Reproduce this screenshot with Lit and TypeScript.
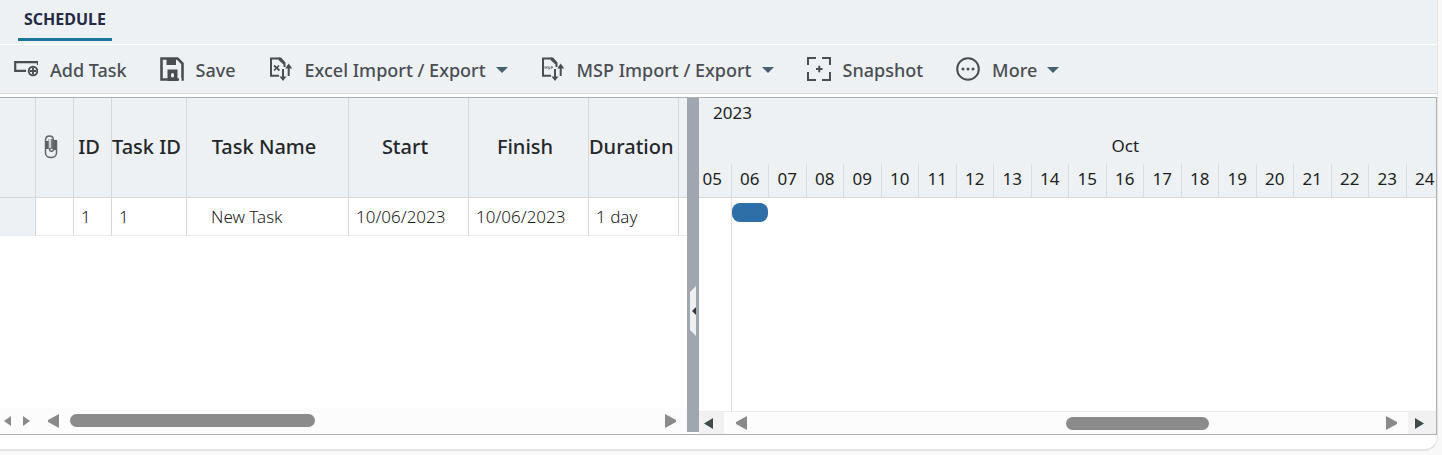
import { LitElement, html, css, svg } from "lit";
import { customElement, state } from "lit/decorators.js";

const transfer = svg`
  <path d="M10 18.700H2V1.500h8.500" fill="none" stroke="currentColor" stroke-width="2"/>
  <path d="M9.500 .5h2.500L16.500 5.500V10h-2V7.500L9.500 3z" fill="currentColor"/>
  <path d="M14 12v9M19.700 8v11" stroke="currentColor" stroke-width="2" fill="none"/>
  <path d="M10.500 19.500h7L14 24zM16.200 11.500h7L19.700 6.500z" fill="currentColor"/>`;

const icons: Record<string, unknown> = {
  add: svg`<path d="M24 8V5.200H1.200V13.800H12" fill="none" stroke="currentColor" stroke-width="2.200"/><circle cx="19" cy="14" r="4.300" fill="none" stroke="currentColor" stroke-width="1.900"/><path d="M16 14h6M19 11v6" stroke="currentColor" stroke-width="1.900"/>`,
  save: svg`
    <path d="M1.500 1.500H17.500L22.500 6.500V22.500H1.500z" fill="none" stroke="currentColor" stroke-width="2.600"/>
    <path d="M6.500 1h9.500v7H6.500zM7.500 12.500h10V24h-10z" fill="currentColor"/>
    <path d="M19 20.800h2.500V24H19z" fill="#edf1f4"/>
    <rect x="11" y="16" width="3" height="4.500" rx="1.500" fill="#edf1f4"/>`,
  excel: svg`${transfer}<path d="M5 8.500l5.500 5M10 8.500l-5 5" stroke="currentColor" stroke-width="1.700"/>`,
  msp: svg`${transfer}<path d="M4 12V9.500l1 1.500 1-1.500V12M8.500 9.700H7.300v1h1.200V12H7.100M10 12.200V9.700h1.600v1.200H10" fill="none" stroke="currentColor" stroke-width=".6"/>`,
  snapshot: svg`<path d="M1 8V1h8M15 1h8v7M23 15v8h-8M9 23H1v-8" fill="none" stroke="currentColor" stroke-width="2"/><path d="M9 12h6.500M12.250 8.750v6.500" stroke="currentColor" stroke-width="2"/>`,
  more: svg`<circle cx="12" cy="12" r="10.800" fill="none" stroke="currentColor" stroke-width="2"/><circle cx="7" cy="12" r="1.500" fill="currentColor"/><circle cx="12" cy="12" r="1.500" fill="currentColor"/><circle cx="17" cy="12" r="1.500" fill="currentColor"/>`,
};

const commands = [
  { icon: "add", label: "Add Task", menu: false },
  { icon: "save", label: "Save", menu: false },
  { icon: "excel", label: "Excel Import / Export", menu: true },
  { icon: "msp", label: "MSP Import / Export", menu: true },
  { icon: "snapshot", label: "Snapshot", menu: false },
  { icon: "more", label: "More", menu: true },
];

const days = Array.from({ length: 20 }, (_, i) => String(i + 5).padStart(2, "0"));

@customElement("schedule-toolbar")
export class ScheduleToolbar extends LitElement {
  static styles = css`
    :host {
      display: flex;
      align-items: center;
      gap: 33px;
      height: 48px;
      padding: 0 14px;
      background: #edf1f4;
      border-bottom: 1px solid #d5dade;
    }
    .command {
      display: flex;
      align-items: center;
      gap: 12px;
      padding: 0;
      border: 0;
      background: none;
      color: #4a4e53;
      font: 500 18px/24px "Noto Sans", "Open Sans", sans-serif;
      white-space: nowrap;
      cursor: pointer;
    }
    .label {
      padding-top: 2px;
    }
    .icon {
      width: 24px;
      height: 24px;
      flex: none;
    }
    .caret {
      width: 12px;
      height: 6px;
      margin: 2px 0 0 -2px;
      fill: #47606d;
    }
  `;
  render() {
    return commands.map(
      (c) => html`<button class="command" type="button">
        <svg class="icon" viewBox="0 0 24 24" aria-hidden="true">${icons[c.icon]}</svg>
        <span class="label">${c.label}</span>
        ${c.menu
          ? html`<svg class="caret" viewBox="0 0 12 6" aria-hidden="true"><path d="M0 0h12L6 6z" /></svg>`
          : ""}
      </button>`
    );
  }
}

@customElement("task-grid")
export class TaskGrid extends LitElement {
  static styles = css`
    :host {
      display: flex;
      flex-direction: column;
      flex: none;
      width: 687px;
      overflow: hidden;
      font-family: "Noto Sans", "Open Sans", sans-serif;
      background: #fff;
    }
    .grid {
      width: 100%;
      table-layout: fixed;
      border-collapse: separate;
      border-spacing: 0;
    }
    .c-row { width: 36px; }
    .c-small { width: 38px; }
    .c-task { width: 75px; }
    .c-name { width: 162px; }
    .c-date { width: 120px; }
    .c-dur { width: 90px; }
    .head,
    .cell {
      box-sizing: border-box;
      text-align: left;
      white-space: nowrap;
      border-right: 1px solid #d6d9dc;
      border-bottom: 1px solid #d6d9dc;
    }
    .head {
      height: 100px;
      padding: 0 7px 2px 0;
      background: #edf1f4;
      color: #24272a;
      font-size: 20px;
      font-weight: 500;
      text-align: center;
    }
    .cell {
      height: 38px;
      padding: 0 0 0 7px;
      color: #1c1c1c;
      font-size: 17px;
      font-weight: 300;
      line-height: 24px;
      border-bottom-color: #ececec;
    }
    .cell.rowhead { background: #edf1f4; }
    .cell.name { padding-left: 24px; }
    .head:last-child,
    .cell:last-child { border-right: 0; }
    .clip {
      display: block;
      width: 14px;
      height: 26px;
      margin-left: 8px;
    }
    .scroll {
      display: flex;
      align-items: center;
      height: 25px;
      margin-top: auto;
      padding-bottom: 1px;
      background: #fcfcfc;
    }
    .arrow {
      display: flex;
      align-items: center;
      justify-content: center;
      flex: none;
      padding: 0;
      border: 0;
      background: none;
      fill: #8a8a8a;
    }
    .small { width: 19px; height: 25px; }
    .small:first-child { width: 15px; }
    .small:nth-child(2) { width: 23px; }
    .big { width: 30px; height: 25px; }
    .track { flex: 1; margin: 0 1px 0 2px; }
    .gap { width: 2px; }
    .thumb {
      width: 42%;
      height: 13px;
      border-radius: 7px;
      background: #8b8b8b;
    }
  `;
  render() {
    return html`
      <table class="grid">
        <colgroup>
          <col class="c-row" /><col class="c-small" /><col class="c-small" /><col class="c-task" />
          <col class="c-name" /><col class="c-date" /><col class="c-date" /><col class="c-dur" /><col />
        </colgroup>
        <thead>
          <tr>
            <th class="head"></th>
            <th class="head" aria-label="Attachments">
              <svg class="clip" viewBox="0 0 14 26">
                <path d="M4.500 5h5v10h-5z" fill="#767a7f" />
                <path d="M2 7h2.500v8H2zM9.500 6H13v10H9.500z" fill="#5a5e64" />
                <path d="M1.500 17V6.500C1.500 .5 9.500 .5 9.500 6.500V15c0 3-4 3-4 0V8M12.500 6.500V19c0 6-11 6-11 0v-3" fill="none" stroke="#62666b" stroke-width="1.500" />
                <path d="M6 5v9" stroke="#edf1f4" stroke-width="1.500" />
              </svg>
            </th>
            <th class="head">ID</th>
            <th class="head">Task ID</th>
            <th class="head">Task Name</th>
            <th class="head">Start</th>
            <th class="head">Finish</th>
            <th class="head">Duration</th>
            <th class="head"></th>
          </tr>
        </thead>
        <tbody>
          <tr>
            <th class="cell rowhead"></th>
            <td class="cell"></td>
            <td class="cell">1</td>
            <td class="cell">1</td>
            <td class="cell name">New Task</td>
            <td class="cell">10/06/2023</td>
            <td class="cell">10/06/2023</td>
            <td class="cell">1 day</td>
            <td class="cell"></td>
          </tr>
        </tbody>
      </table>
      <div class="scroll">
        <button class="arrow small" type="button" aria-label="Previous"><svg width="7" height="10"><path d="M7 0v10L0 5z" /></svg></button>
        <button class="arrow small" type="button" aria-label="Next"><svg width="7" height="10"><path d="M0 0v10l7-5z" /></svg></button>
        <button class="arrow big" type="button" aria-label="Scroll left"><svg width="11" height="14"><path d="M11 0v14L0 8V6z" /></svg></button>
        <div class="track"><div class="thumb"></div></div>
        <button class="arrow big" type="button" aria-label="Scroll right"><svg width="11" height="14"><path d="M0 0v14l11-6V6z" /></svg></button>
        <span class="gap"></span>
      </div>
    `;
  }
}

@customElement("gantt-chart")
export class GanttChart extends LitElement {
  static styles = css`
    :host {
      display: flex;
      flex-direction: column;
      flex: 1;
      min-width: 0;
      overflow: hidden;
      font-family: "Noto Sans", "Open Sans", sans-serif;
    }
    .header {
      height: 99px;
      background: #edf1f4;
      border-bottom: 1px solid #d6d9dc;
      color: #1c1f22;
      font-size: 17px;
      font-weight: 400;
      line-height: 30px;
    }
    .year {
      height: 33px;
      padding-left: 14px;
    }
    .months,
    .days,
    .lanes {
      display: grid;
      grid-template-columns: repeat(20, 1fr);
      width: 750px;
      margin-left: -5px;
      text-align: center;
    }
    .months,
    .days { height: 33px; }
    .month { grid-column: 12; }
    .day { border-right: 1px solid #d9dde0; }
    .lanes { flex: 1; }
    .past { border-right: 1px solid #e0e0e0; }
    .bar {
      height: 19px;
      margin: 5px 1px 0 0;
      border-radius: 8px;
      background: #2f6fa7;
    }
    .scroll {
      display: flex;
      align-items: center;
      height: 22px;
      border-top: 1px solid #ececec;
      background: #fcfcfc;
    }
    .arrow {
      display: flex;
      align-items: center;
      justify-content: center;
      flex: none;
      width: 34px;
      height: 22px;
      padding: 0;
      border: 0;
      background: none;
      fill: #8a8a8a;
    }
    .page {
      width: 25px;
      padding-right: 6px;
      background: #f1f1f1;
      fill: #43494f;
    }
    .page:last-child { width: 28px; }
    .track { flex: 1; }
    .thumb {
      box-sizing: border-box;
      width: 143px;
      height: 13px;
      margin-left: 50%;
      border-radius: 7px;
      background: #8b8b8b;
    }
  `;
  render() {
    return html`
      <div class="header">
        <div class="year">2023</div>
        <div class="months"><span class="month">Oct</span></div>
        <div class="days">${days.map((d) => html`<span class="day">${d}</span>`)}</div>
      </div>
      <div class="lanes">
        <div class="past"></div>
        <div class="bar" title="New Task"></div>
      </div>
      <div class="scroll">
        <button class="arrow page" type="button" aria-label="Previous period"><svg width="9" height="11"><path d="M9 0v11L0 5.500z" /></svg></button>
        <button class="arrow" type="button" aria-label="Scroll left"><svg width="11" height="14"><path d="M11 0v14L0 8V6z" /></svg></button>
        <div class="track"><div class="thumb"></div></div>
        <button class="arrow" type="button" aria-label="Scroll right"><svg width="11" height="14"><path d="M0 0v14l11-6V6z" /></svg></button>
        <button class="arrow page" type="button" aria-label="Next period"><svg width="9" height="11"><path d="M0 0v11l9-5.500z" /></svg></button>
      </div>
    `;
  }
}

@customElement("app-root")
export class AppRoot extends LitElement {
  @state() private collapsed = false;

  static styles = css`
    :host {
      display: flex;
      box-sizing: border-box;
      min-height: 100vh;
      padding: 0 4px 4px 0;
      background: #f8f8f8;
      font-family: "Noto Sans", "Open Sans", sans-serif;
    }
    .card {
      display: flex;
      flex-direction: column;
      flex: 1;
      min-width: 0;
      background: #fff;
      border-right: 1px solid #e4e4e4;
      border-bottom: 2px solid #e4e4e4;
      border-bottom-right-radius: 14px;
      overflow: hidden;
    }
    .tabs {
      height: 44px;
      padding-left: 18px;
      background: #edf1f4;
      border-bottom: 1px solid #fff;
    }
    .tab {
      height: 41px;
      padding: 0 6px;
      border: 0;
      border-bottom: 3px solid #1b769c;
      background: none;
      color: #252b45;
      font: 700 16px/36px "Noto Sans", "Open Sans", sans-serif;
    }
    .panes {
      display: flex;
      flex: 1;
      margin: 3px 0 14px;
      border: solid #adb0b3;
      border-width: 1px 1px 1px 0;
    }
    .splitter {
      display: flex;
      align-items: center;
      flex: none;
      width: 12px;
      margin-bottom: 2px;
      background: #9fa6af;
    }
    .collapse {
      display: flex;
      align-items: center;
      width: 6px;
      height: 50px;
      margin: 92px 0 0 3px;
      padding: 0 0 0 2px;
      border: 0;
      background: #f0f0f0;
      clip-path: polygon(0 12%, 100% 0, 100% 100%, 0 88%);
    }
    .hidden { display: none; }
  `;

  render() {
    return html`
      <main class="card">
        <nav class="tabs"><button class="tab" type="button">SCHEDULE</button></nav>
        <schedule-toolbar></schedule-toolbar>
        <section class="panes">
          <task-grid class=${this.collapsed ? "hidden" : ""}></task-grid>
          <div class="splitter">
            <button class="collapse" type="button" aria-label="Toggle task list" @click=${() => (this.collapsed = !this.collapsed)}>
              <svg width="4" height="8"><path d="M4 0v8L0 4z" fill="#33373b" /></svg>
            </button>
          </div>
          <gantt-chart></gantt-chart>
        </section>
      </main>
    `;
  }
}
